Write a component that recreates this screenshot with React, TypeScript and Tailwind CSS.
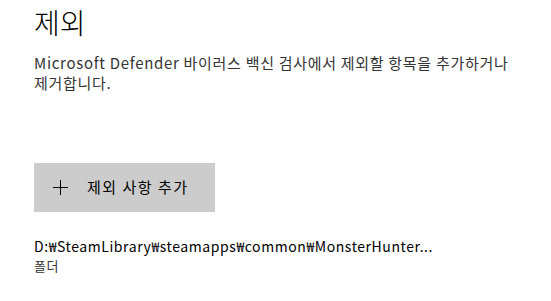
import React from 'react';

export default function App() {
  return (
    <div className="w-[551px] h-[301px] bg-white text-black overflow-hidden pl-[34px] pt-[4px] font-['Noto_Sans_CJK_KR','Noto_Sans',sans-serif]">
      <h1 className="text-[28px] leading-[36px] font-light text-black">제외</h1>

      <p className="mt-[13px] text-[15px] leading-[20px] tracking-[0.7px] text-[#333333] font-normal">
        Microsoft Defender 바이러스 백신 검사에서 제외할 항목을 추가하거나
        <br />
        제거합니다.
      </p>

      <button className="mt-[70px] w-[181px] h-[49px] bg-[#cccccc] flex items-center pl-[19px] text-[15px] tracking-[1.5px] text-black">
        <svg width="15" height="15" viewBox="0 0 15 15" className="shrink-0">
          <path d="M7.5 0V15M0 7.5H15" stroke="#000" strokeWidth="1" />
        </svg>
        <span className="ml-[19px]">제외 사항 추가</span>
      </button>

      <div className="mt-[24px] text-[14px] leading-[21px] tracking-[0.57px] text-black">
        <div>D:₩SteamLibrary₩steamapps₩common₩MonsterHunter...</div>
        <div className="text-[13px] leading-[18px] text-[#333333]">폴더</div>
      </div>
    </div>
  );
}
